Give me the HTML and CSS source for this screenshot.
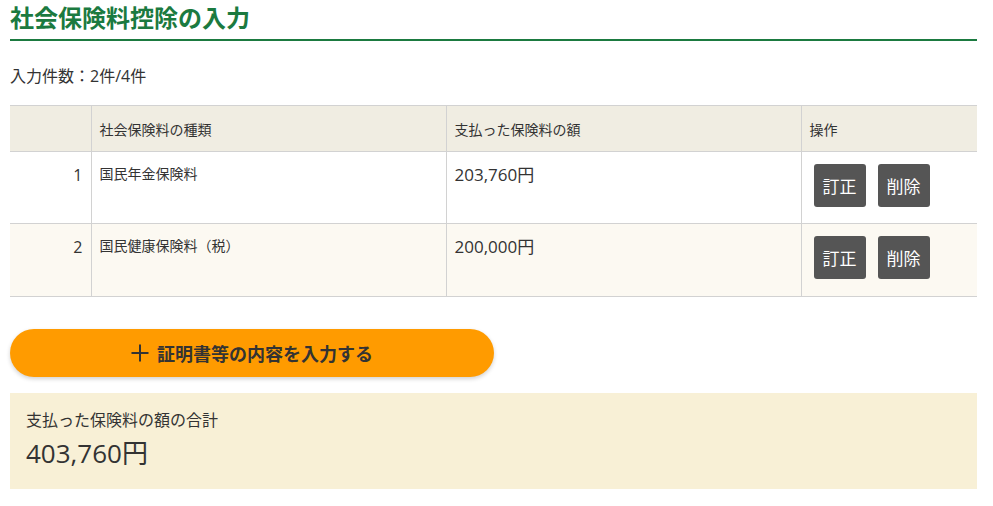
FILE: index.html
```html
<!DOCTYPE html>
<html lang="ja">
<head>
<meta charset="utf-8">
<link rel="stylesheet" href="styles.css">
</head>
<body>
<div class="page">
  <h1 class="title">社会保険料控除の入力</h1>
  <p class="count">入力件数：2件/4件</p>
  <table class="list">
    <colgroup>
      <col class="w-no">
      <col class="w-type">
      <col class="w-amt">
      <col class="w-op">
    </colgroup>
    <thead>
      <tr>
        <th></th>
        <th>社会保険料の種類</th>
        <th>支払った保険料の額</th>
        <th>操作</th>
      </tr>
    </thead>
    <tbody>
      <tr>
        <td class="c-no">1</td>
        <td class="c-type">国民年金保険料</td>
        <td class="c-amt">203,760円</td>
        <td class="c-op"><div class="ops"><button class="btn">訂正</button><button class="btn">削除</button></div></td>
      </tr>
      <tr class="alt">
        <td class="c-no">2</td>
        <td class="c-type">国民健康保険料（税）</td>
        <td class="c-amt">200,000円</td>
        <td class="c-op"><div class="ops"><button class="btn">訂正</button><button class="btn">削除</button></div></td>
      </tr>
    </tbody>
  </table>
  <button class="add">
    <svg class="plus" width="18" height="18" viewBox="0 0 18 18"><path d="M9 0.5v17M0.5 9h17" stroke="#333" stroke-width="2" fill="none"/></svg>
    <span>証明書等の内容を入力する</span>
  </button>
  <div class="total">
    <div class="total-label">支払った保険料の額の合計</div>
    <div class="total-value">403,760円</div>
  </div>
</div>
</body>
</html>
```

FILE: styles.css
```css
html, body {
  margin: 0;
  padding: 0;
  background: #fff;
}
body {
  font-family: "Open Sans", "Noto Sans CJK JP", sans-serif;
  color: #333;
}
.page {
  width: 967px;
  padding: 0 10px;
}
.title {
  margin: 0;
  height: 39px;
  font-size: 24px;
  line-height: 33px;
  font-weight: bold;
  color: #1b7a40;
  border-bottom: 2px solid #1b7a40;
  font-family: "Noto Sans CJK JP", sans-serif;
}
.count {
  margin: 0;
  padding: 25px 0 19px;
  font-size: 16px;
  line-height: 20px;
}
.list {
  width: 967px;
  border-collapse: collapse;
  table-layout: fixed;
  font-size: 14px;
}
.w-no { width: 81px; }
.w-type { width: 355px; }
.w-amt { width: 355px; }
.list th {
  background: #f0ede2;
  font-weight: normal;
  text-align: left;
  height: 45px;
  padding: 0 8px;
  border-top: 1px solid #d2d2d2;
  border-bottom: 1px solid #d2d2d2;
  font-size: 14px;
}
.list td {
  vertical-align: top;
  height: 72px;
  padding: 12px 8px 0;
  box-sizing: border-box;
  border-bottom: 1px solid #d2d2d2;
  line-height: 20px;
}
.list tr.alt td {
  background: #fcf9f2;
  height: 73px;
}
.list th + th, .list td + td {
  border-left: 1px solid #d2d2d2;
}
.list td.c-no {
  text-align: right;
  font-size: 16px;
  line-height: 22px;
  padding-top: 12px;
}
.list td.c-amt {
  font-size: 17px;
  line-height: 22px;
  padding-top: 12px;
}
.list td.c-op {
  padding: 12px 12px 0;
}
.ops {
  display: flex;
  gap: 12px;
}
.btn {
  width: 52px;
  height: 43px;
  border: none;
  border-radius: 3px;
  background: #555;
  color: #fff;
  font-family: "Noto Sans CJK JP", sans-serif;
  font-size: 17px;
  padding: 0;
}
.add {
  margin-top: 32px;
  width: 484px;
  height: 48px;
  border: none;
  border-radius: 24px;
  background: #ff9b00;
  box-shadow: 0 2px 4px rgba(0,0,0,0.18);
  display: flex;
  align-items: center;
  justify-content: center;
  gap: 8px;
  font-family: "Noto Sans CJK JP", sans-serif;
  font-size: 18px;
  font-weight: bold;
  color: #333;
  padding: 0;
}
.plus {
  display: block;
}
.total {
  margin-top: 16px;
  background: #f8f0d6;
  height: 96px;
  box-sizing: border-box;
  padding: 16px 16px 0;
}
.total-label {
  font-size: 16px;
  line-height: 22px;
}
.total-value {
  margin-top: 6px;
  font-size: 26px;
  line-height: 32px;
}
```
